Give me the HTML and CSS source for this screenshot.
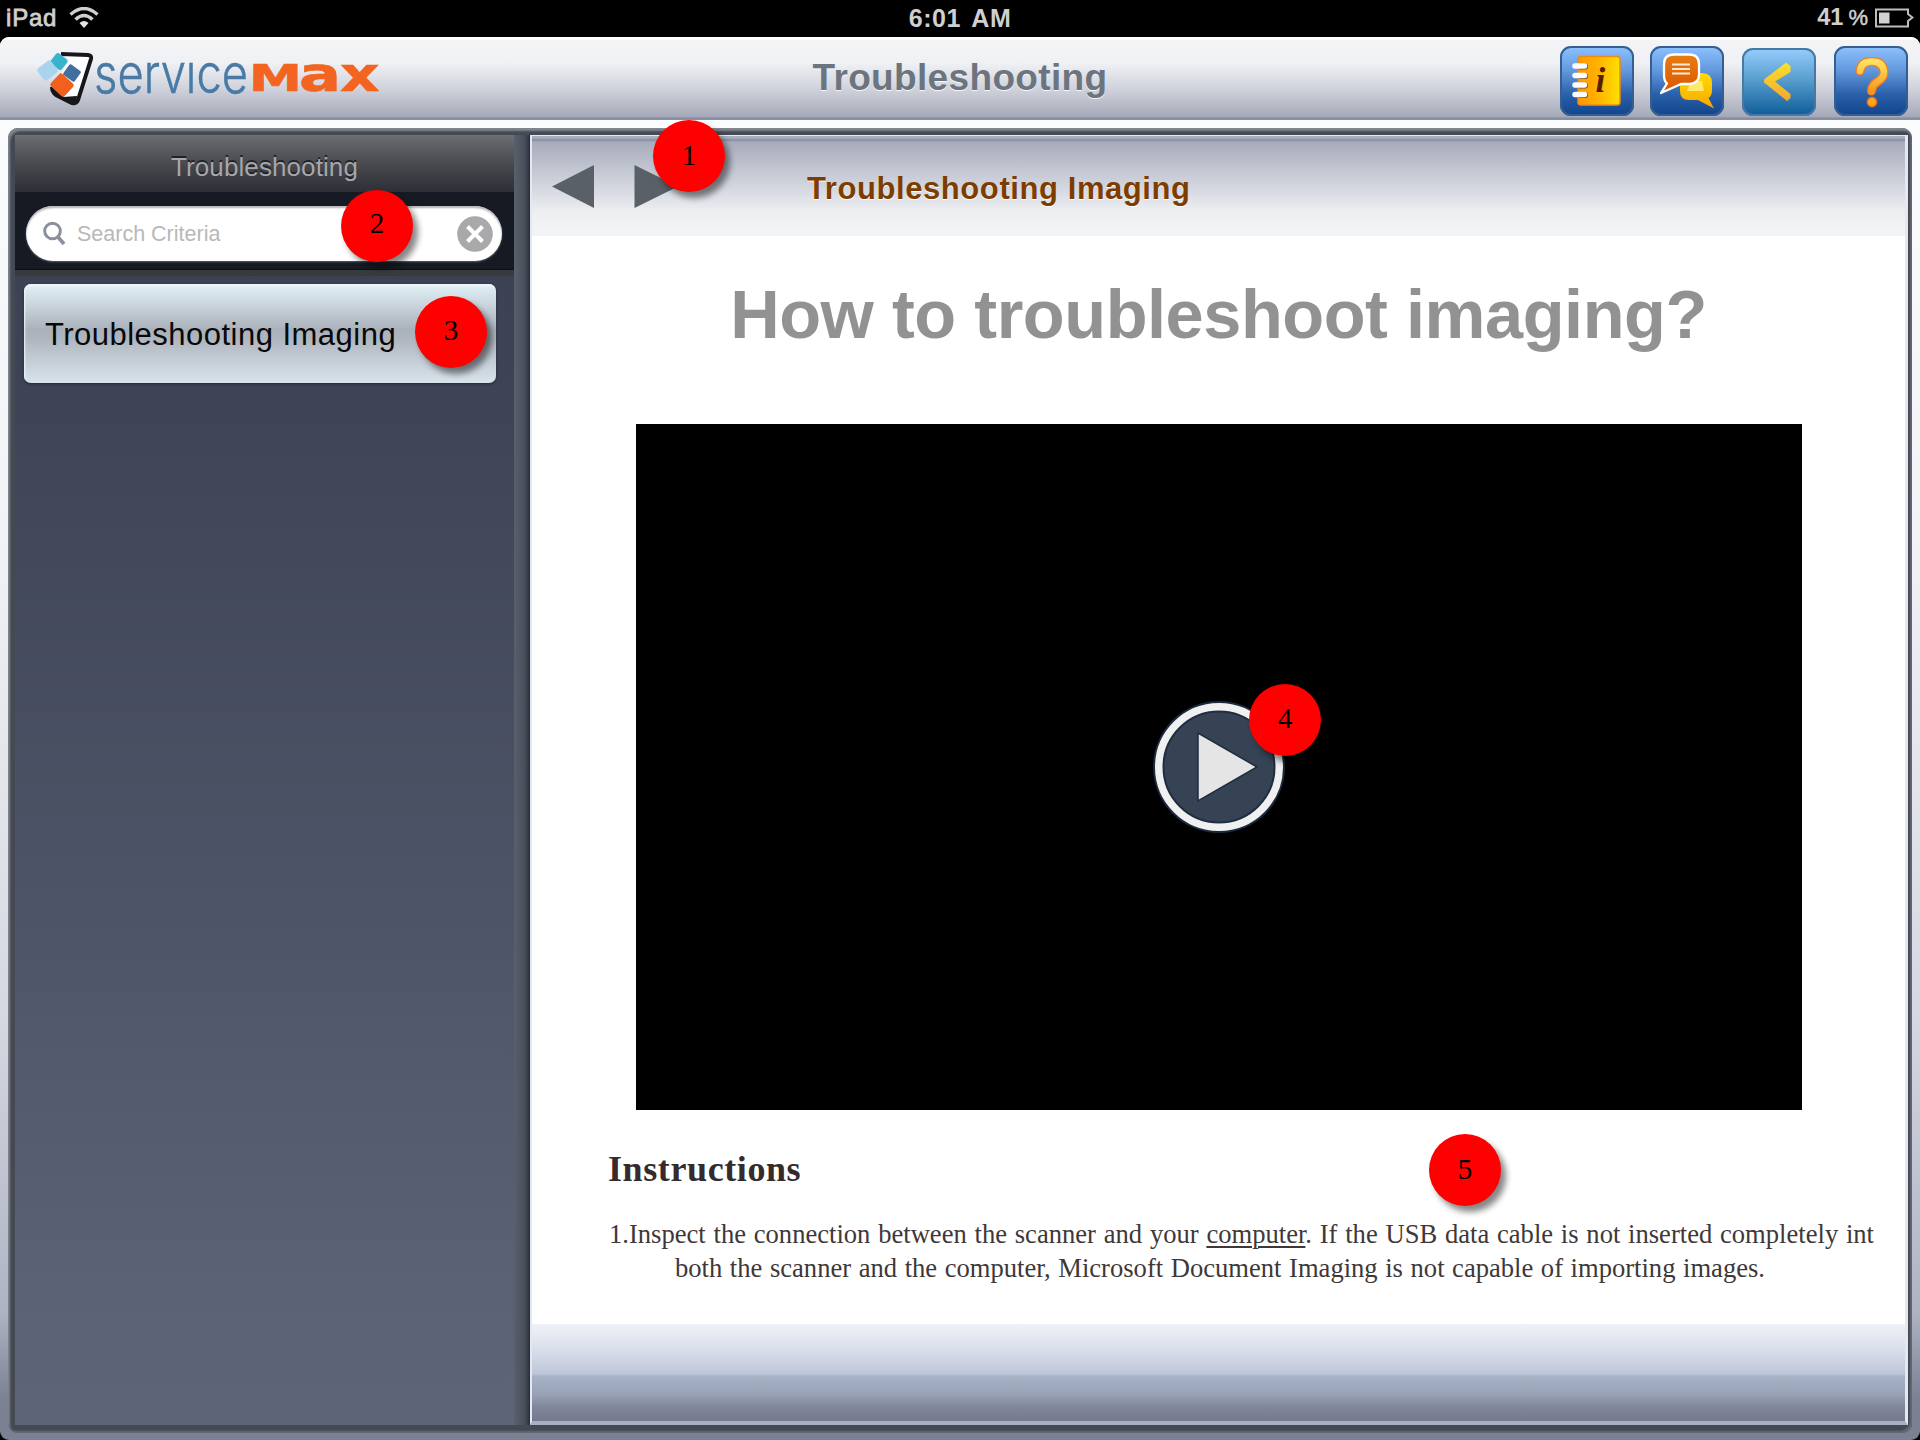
FILE: index.html
```html
<!DOCTYPE html>
<html lang="en">
<head>
<meta charset="utf-8">
<title>Troubleshooting</title>
<link rel="stylesheet" href="styles.css">
</head>
<body>
<div class="device">
  <div class="status">
    <div class="carrier"><span>iPad</span>
      <svg width="30" height="22" viewBox="0 0 30 22" fill="none" stroke="#cfcfcf"><path d="M1.500 7.500Q15-4.500 28.500 7.500" stroke-width="3.300"/><path d="M6.500 12.500Q15 4.500 23.500 12.500" stroke-width="3.300"/><path d="M10.500 16Q15 12 19.500 16L15 21Z" fill="#e4e4e4" stroke="none"/></svg>
    </div>
    <div class="clock">6:01 AM</div>
    <div class="battery"><span>41<i>%</i></span>
      <svg width="40" height="20" viewBox="0 0 40 20"><path d="M2 1.500H34V6L38.500 9.500L34 13V18.500H2Z" fill="none" stroke="#bdbdbd" stroke-width="2"/><rect x="5" y="4.500" width="10.500" height="11" fill="#d2d2d2"/></svg>
    </div>
  </div>
  <div class="shell">
    <header class="topbar">
      <svg class="logo" width="350" height="60" viewBox="34 48 350 60">
        <defs><clipPath id="xheight"><rect x="90" y="62" width="160" height="40"/></clipPath></defs>
        <path d="M61 53.500L89 53.500Q92.500 54 92 58L79 100Q77 104.500 72 103.500L53 94V86L70 60Z" fill="#fff"/>
        <path d="M61 54L88 55Q92 55.500 91 59L78 100Q76 104 72 103L56 95Q52 92 52 87" fill="none" stroke="#17171b" stroke-width="4"/>
        <path d="M52 86L63 97L77 96L76 104L68 103L54 95Z" fill="#17171b"/>
        <rect x="-7" y="-6.500" width="14" height="13" rx="2.500" transform="translate(59 61.500) rotate(38)" fill="#39b3cb"/>
        <rect x="-8.500" y="-7.500" width="17" height="15" rx="2.500" transform="translate(47.500 70.500) rotate(-38)" fill="#a9d4ed"/>
        <rect x="-7" y="-6.500" width="14" height="13" rx="1.500" transform="translate(72 73) rotate(36)" fill="#416f9e"/>
        <rect x="-9.500" y="-8.500" width="19" height="17" rx="2.500" transform="translate(62 85) rotate(43)" fill="#f2601f"/>
        <g clip-path="url(#xheight)"><text class="logo-thin" x="94" y="92.500" textLength="154" lengthAdjust="spacingAndGlyphs">service</text></g>
        <text class="logo-max logo-m" x="249" y="91" textLength="53" lengthAdjust="spacingAndGlyphs">M</text>
        <text class="logo-max" x="299" y="91" textLength="42" lengthAdjust="spacingAndGlyphs">a</text>
        <text class="logo-max" x="340" y="91" textLength="39.500" lengthAdjust="spacingAndGlyphs">x</text>
      </svg>
      <h1>Troubleshooting</h1>
      <nav class="tools">
        <svg class="tool" width="74" height="70" viewBox="0 0 74 70">
          <defs><linearGradient id="book"><stop offset="0" stop-color="#ff9800"/><stop offset=".5" stop-color="#ffb400"/><stop offset="1" stop-color="#ffe100"/></linearGradient></defs>
          <rect x="18" y="10.500" width="42" height="48.500" rx="3" fill="url(#book)" stroke="#f28a12" stroke-width="1.500"/>
          <g stroke="#754a1c" stroke-width="6" stroke-linecap="round"><path d="M20 20.500h5M20 30h5M20 39.500h5M20 49h5"/></g>
          <g stroke="#fff" stroke-width="5.500" stroke-linecap="round"><path d="M15 20h9.500M15 29.500h9.500M15 39h9.500M15 48.500h9.500"/></g>
          <text x="35.500" y="45.500" class="info">i</text>
        </svg>
        <svg class="tool" width="74" height="70" viewBox="0 0 74 70">
          <defs><linearGradient id="talk" x2="0" y2="1"><stop offset="0" stop-color="#e87c12"/><stop offset="1" stop-color="#dc5600"/></linearGradient><linearGradient id="reply" x2="0" y2="1"><stop offset="0" stop-color="#ffdd00"/><stop offset="1" stop-color="#f9a500"/></linearGradient></defs>
          <path d="M40 27H52Q62 27 62 37V44Q62 50 58.500 52L64 62.500L48 54H39Q30 54 30 45V36Q30 27 40 27Z" fill="url(#reply)"/>
          <path d="M41 35H52L54 45H37Z" fill="#ffe86a"/>
          <path d="M24 8.500H39Q49 8.500 49 18V29Q49 37 40 38H31L11 47L17 37.500Q14 35 14 29V18Q14 8.500 24 8.500Z" fill="url(#talk)" stroke="#fff" stroke-width="2.300" stroke-linejoin="round"/>
          <path d="M22 18.500H40M22 23H40M22 27.500H40" stroke="#ffe9cf" stroke-width="2"/>
        </svg>
        <svg class="tool tool-back" width="74" height="68" viewBox="0 0 74 68">
          <defs><linearGradient id="arrow" x2="0" y2="1"><stop offset="0" stop-color="#fbe12b"/><stop offset="1" stop-color="#f6a62f"/></linearGradient></defs>
          <path d="M44 14.500L48.500 18V24L33 33.500L48.500 46V50L45 53L22 34.500V31.500Z" fill="url(#arrow)"/>
        </svg>
        <svg class="tool" width="74" height="70" viewBox="0 0 74 70">
          <defs><linearGradient id="ask" x2="0" y2="1"><stop offset="0" stop-color="#ffe260"/><stop offset="1" stop-color="#f7981d"/></linearGradient></defs>
          <path d="M26 25Q27 15.500 38 15.500T50 26Q50 32 43 36Q38 39 37.500 45" fill="none" stroke="#f47b20" stroke-width="9" stroke-linecap="round"/>
          <path d="M26 25Q27 15.500 38 15.500T50 26Q50 32 43 36Q38 39 37.500 45" fill="none" stroke="url(#ask)" stroke-width="6.500" stroke-linecap="round"/>
          <circle cx="38" cy="56" r="4.700" fill="#fba919" stroke="#ee6525" stroke-width="1.500"/>
        </svg>
      </nav>
    </header>
    <div class="frame">
      <aside class="sidebar">
        <h2>Troubleshooting</h2>
        <div class="searchbar">
          <div class="search">
            <svg width="24" height="26" viewBox="0 0 24 26" fill="none" stroke="#8a909d"><circle cx="9.500" cy="10" r="7.800" stroke-width="3"/><path d="M15 16L21 23" stroke-width="3.600"/></svg>
            <span>Search Criteria</span>
            <svg width="36" height="36" viewBox="0 0 36 36"><circle cx="18" cy="18" r="17.800" fill="#a9a9ab"/><path d="M10.500 10.500L25.500 25.500M25.500 10.500L10.500 25.500" stroke="#fff" stroke-width="4"/></svg>
          </div>
        </div>
        <div class="item">Troubleshooting Imaging</div>
      </aside>
      <div class="divider"></div>
      <main class="content">
        <div class="pager">
          <svg width="128" height="44" viewBox="0 0 128 44" fill="#596067"><path d="M42 0V43L0 21.500ZM82.500 0V43L126 21.500Z"/></svg>
          <h2>Troubleshooting Imaging</h2>
        </div>
        <article>
          <h3>How to troubleshoot imaging?</h3>
          <div class="video">
            <svg width="136" height="136" viewBox="0 0 136 136"><circle cx="68" cy="68" r="66" fill="#1c2a3d"/><circle cx="68" cy="68" r="60" fill="#364354" stroke="#f0f0f0" stroke-width="8"/><circle cx="68" cy="68" r="55.500" fill="none" stroke="#202e42" stroke-width="2"/><path d="M47 34L106 68L47 102Z" fill="#e5e5e6" stroke="#1f2d40" stroke-width="1.500"/></svg>
          </div>
          <h4>Instructions</h4>
          <p class="line-one">1.Inspect the connection between the scanner and your <u>computer</u>. If the USB data cable is not inserted completely int</p>
          <p class="line-two">both the scanner and the computer, Microsoft Document Imaging is not capable of importing images.</p>
        </article>
        <footer></footer>
      </main>
    </div>
  </div>
  <span class="badge badge-1">1</span>
  <span class="badge badge-2">2</span>
  <span class="badge badge-3">3</span>
  <span class="badge badge-4">4</span>
  <span class="badge badge-5">5</span>
</div>
</body>
</html>
```
FILE: styles.css
```css
* { box-sizing: border-box; margin: 0; }
body { margin: 0; background: #000; font-family: "Liberation Sans", Arial, sans-serif; }
svg { display: block; flex: none; }
.device { position: relative; width: 1920px; height: 1440px; display: flex; flex-direction: column; overflow: hidden; background: #000; }

.status { height: 37px; display: grid; grid-template-columns: 1fr auto 1fr; align-items: center; padding: 0 6px 3px; color: #cfcfcf; font-size: 24px; font-weight: bold; line-height: 34px; }
.carrier, .battery { display: flex; align-items: center; }
.carrier { gap: 12px; font-weight: normal; -webkit-text-stroke: .8px #cfcfcf; letter-spacing: .8px; }
.clock { font-size: 25px; letter-spacing: .5px; word-spacing: 4px; }
.battery { justify-content: flex-end; gap: 6px; }
.battery span { font-size: 23.500px; }
.battery i { font-style: normal; font-weight: normal; font-size: 22px; margin-left: 5px; -webkit-text-stroke: .5px #cfcfcf; }

.shell { height: 1403px; display: flex; flex-direction: column; border-radius: 9px; overflow: hidden; padding-bottom: 7px; background: linear-gradient(#fff 0, #fafbfd 8%, #f2f3f6 35%, #d5d8e1 70%, #aeb3c4 91%, #7b8294 97%, #7b8093); }
.topbar { height: 83px; flex: none; display: grid; grid-template-columns: 600px 1fr 600px; align-items: start; background: linear-gradient(#fff 0, #fff 2px, #f4f4f7 3px, #f0f1f4 26px, #d5d7e0 48px, #bbbeca 66px, #a5a9b7 80px, #858ba0 81px, #8c92a5 83px); }
.logo { margin: 11px 0 0 34px; overflow: visible; }
.logo-thin { font-family: Inter, Roboto, sans-serif; font-weight: 300; font-size: 54px; fill: #477aa4; stroke: #477aa4; stroke-width: .5px; }
.logo-max { font-family: "DejaVu Sans", sans-serif; font-weight: bold; font-size: 48px; fill: #f2641f; stroke: #f2641f; stroke-width: .7px; }
.logo-m { font-size: 37px; }
.topbar h1 { text-align: center; font-size: 37px; line-height: 42px; margin-top: 20px; color: #6b747f; text-shadow: 0 1px #f7f7fa; letter-spacing: .35px; }
.tools { display: flex; justify-content: flex-end; align-items: flex-end; height: 79px; padding-right: 12px; gap: 18px; }
.tool { border-radius: 11px; background: linear-gradient(#8fc2ff, #6299dd 35%, #2b62ab 68%, #10438b); box-shadow: inset 0 0 0 2px #365f91; }
.tool:nth-child(2) { margin-left: -2px; }
.tool-back { background: linear-gradient(#97ceff, #599fcf 45%, #0d5b98); box-shadow: inset 0 0 0 2px #4679a4; }
.info { font: italic bold 35px "Liberation Serif", serif; fill: #551f00; }

.frame { height: 1305px; margin: 8px 8px 0; padding: 7px 4px 8px 7px; display: flex; flex: none; border-radius: 10px; background: #444954; box-shadow: inset 2px 3px 2px #81868d, inset -2px -2px 2px #666a75; }
.sidebar { width: 499px; background: linear-gradient(#3a3f51 0, #3e4356 20%, #4f5568 62%, #5b6276 90%, #5d6478); display: flex; flex-direction: column; }
.divider { width: 16px; background: linear-gradient(90deg, #5a5f6c, #4a4f5c 65%, #393e4b 85%, #252a39); }
.sidebar h2 { height: 57px; font-size: 26px; font-weight: normal; line-height: 64px; text-align: center; color: #a6a7aa; text-shadow: 0 -2px #202227; background: linear-gradient(#707177 0, #66676b 5px, #494a4f 50%, #2c2f36); letter-spacing: .1px; }
.searchbar { height: 84px; padding: 14px 12px 0 11px; background: #151a23; border-bottom: 6px solid #393a3e; box-shadow: inset 0 -1px #0b0e14, inset 0 -84px #151a23; }
.search { height: 55px; display: flex; align-items: center; padding: 0 9px 0 17px; border-radius: 28px; background: #fff; box-shadow: inset 0 2px 2px #b5b5b5, 0 1px 2px #5c6471; }
.search span { flex: 1; margin: 2px 0 0 10px; font-size: 21.500px; color: #b8b8b8; }
.item { height: 99px; margin: 8px 18px 0 9px; padding-left: 21px; border-radius: 7px; font-size: 31px; line-height: 101px; letter-spacing: .48px; white-space: nowrap; color: #080808; background: linear-gradient(#e1f1f7 0, #cbd6de 20%, #aab1bb 46%, #aeb5bf 55%, #c9d2db 82%, #d8e3ea); box-shadow: inset 1px 2px 2px #edf7fb, 0 1px 3px #23283b; }

.content { flex: 1; display: flex; flex-direction: column; border: solid #e5e8f0; border-width: 1px 3px 4px 2px; border-bottom-color: #aab0c4; background: #fff; }
.pager { height: 100px; display: flex; padding: 29px 0 0 20px; background: linear-gradient(#a9aebe 0, #a9aebe 2px, #858da1 4px, #a8acba 6px, #bfc3cf 30%, #dadde4 58%, #eceef1 75%, #f4f5f7); }
.pager h2 { margin-left: 127px; padding-top: 5px; font-size: 31px; line-height: 38px; letter-spacing: .58px; color: #7e3d00; text-shadow: 0 1px #fff; white-space: nowrap; }
article { height: 1088px; }
h3 { height: 188px; padding-top: 37px; font-size: 68.500px; line-height: 84px; text-align: center; color: #929292; letter-spacing: -.45px; white-space: nowrap; }
.video { width: 1166px; height: 686px; margin-left: 104px; display: flex; align-items: center; justify-content: center; background: #000; }
h4 { margin: 36px 0 0 76px; font: bold 36px/46px "Liberation Serif", serif; color: #352b2c; letter-spacing: .6px; }
p { font: 26.600px/34px "Liberation Serif", serif; color: #403838; text-align-last: justify; white-space: nowrap; }
.line-one { width: 1265px; margin: 25px 0 0 77px; }
.line-two { width: 1090px; margin-left: 143px; }
u { text-underline-offset: 3px; text-decoration-thickness: 2px; }
footer { flex: 1; background: linear-gradient(#eff2f8 0, #d8ddea 28%, #bec6da 51%, #a8b2c8 54%, #98a2b4 73%, #83899d 84%, #74798d); }

.badge { position: absolute; width: 72px; height: 72px; border-radius: 50%; background: #f00; box-shadow: 5px 6px 6px rgba(0, 0, 0, .48); color: #000; font: 29px/69px "Liberation Serif", serif; text-align: center; }
.badge-1 { left: 653px; top: 120px; line-height: 71px; }
.badge-2 { left: 341px; top: 190px; line-height: 67px; }
.badge-3 { left: 415px; top: 296px; }
.badge-4 { left: 1249px; top: 684px; }
.badge-5 { left: 1429px; top: 1134px; line-height: 71px; }
```
